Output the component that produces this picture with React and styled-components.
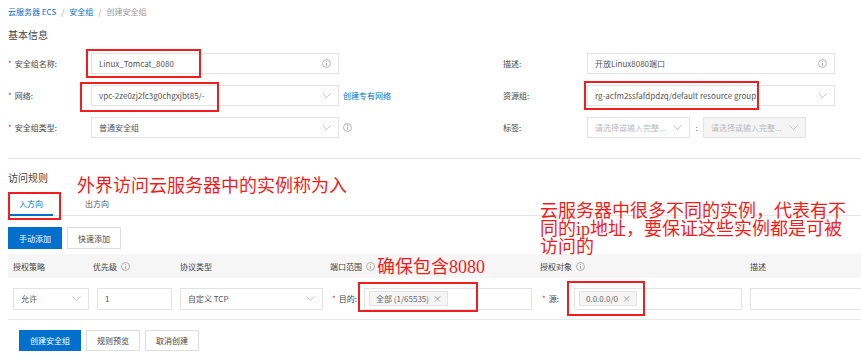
import React from 'react';
import styled, { createGlobalStyle } from 'styled-components';

const GlobalStyle = createGlobalStyle`
  html, body { margin: 0; padding: 0; background: #fff; overflow: hidden; }
  body { font-family: "Noto Sans CJK SC", "Noto Sans", sans-serif; color: #444; }
  * { box-sizing: border-box; }
`;

const Page = styled.div`
  position: relative;
  width: 861px;
  height: 363px;
  overflow: hidden;
  padding-left: 8px;
  font-size: 8px;
`;

const Breadcrumb = styled.nav`
  display: flex;
  align-items: center;
  gap: 5px;
  height: 22px;
  font-size: 8px;
`;

const Crumb = styled.span`
  color: ${(p) => (p.$link ? '#0070cc' : '#999')};
`;

const SectionTitle = styled.div`
  font-size: 10px;
  line-height: 16px;
  color: #444;
  margin-top: ${(p) => p.$mt}px;
`;

const FormGrid = styled.div`
  display: grid;
  grid-template-columns: 495px 1fr;
  grid-auto-rows: 21px;
  row-gap: 11px;
  margin-top: 10px;
`;

const Field = styled.div`
  display: flex;
  align-items: center;
  height: 21px;
`;

const Label = styled.div`
  width: ${(p) => p.$w}px;
  flex-shrink: 0;
  display: flex;
  align-items: center;
  color: #444;
  font-size: 8px;
  padding-left: ${(p) => p.$pl || 0}px;
`;

const Star = styled.span`
  color: #e4393c;
  margin-right: 3px;
`;

const Box = styled.div`
  width: ${(p) => p.$w}px;
  height: ${(p) => p.$h || 21}px;
  flex-shrink: 0;
  margin-left: ${(p) => p.$ml || 0}px;
  border: 1px solid #e3e3e3;
  background: ${(p) => (p.$disabled ? '#f5f5f5' : '#fff')};
  display: flex;
  align-items: center;
  justify-content: space-between;
  padding: 0 ${(p) => p.$pr ?? 7}px 0 ${(p) => p.$pl ?? 7}px;
  color: #555;
  font-size: 8px;
  white-space: nowrap;
  overflow: hidden;
`;

const Placeholder = styled.span`
  color: #bbb;
`;

const Link = styled.a`
  color: #0070cc;
  margin-left: 4px;
  text-decoration: none;
`;

const IconWrap = styled.span`
  display: inline-flex;
  align-items: center;
  margin-left: ${(p) => p.$ml || 0}px;
`;

const TagSep = styled.span`
  width: 13px;
  text-align: center;
  color: #666;
`;

const Divider = styled.div`
  margin-top: 20px;
  border-top: 1px solid #e5e5e5;
`;

const TabBar = styled.div`
  display: flex;
  gap: 22px;
  margin-top: 7px;
  padding-left: 1px;
  border-bottom: 1px solid #e5e5e5;
`;

const Tab = styled.div`
  padding: 0 10px;
  line-height: 21px;
  font-size: 8px;
  color: ${(p) => (p.$active ? '#0070cc' : '#555')};
  border-bottom: 2px solid ${(p) => (p.$active ? '#0070cc' : 'transparent')};
  margin-bottom: -1px;
`;

const ButtonRow = styled.div`
  display: flex;
  gap: ${(p) => p.$gap || 5}px;
  margin-top: ${(p) => p.$mt}px;
  padding-left: ${(p) => p.$pl || 0}px;
`;

const Button = styled.button`
  height: ${(p) => p.$h || 22}px;
  padding: 0 10px;
  font-family: inherit;
  font-size: 8px;
  border: 1px solid ${(p) => (p.$primary ? '#0070cc' : '#ddd')};
  background: ${(p) => (p.$primary ? '#0070cc' : '#fff')};
  color: ${(p) => (p.$primary ? '#fff' : '#444')};
  border-radius: 0;
`;

const Table = styled.div`
  width: 900px;
  margin-top: 5px;
`;

const cols = '80px 87px 150px 210px 210px 1fr';

const HeaderRow = styled.div`
  display: grid;
  grid-template-columns: ${cols};
  align-items: center;
  height: 24px;
  padding-left: 5px;
  background: #f6f6f6;
  color: #444;
`;

const HeadCell = styled.div`
  display: flex;
  align-items: center;
  gap: 4px;
`;

const BodyRow = styled.div`
  display: grid;
  grid-template-columns: ${cols};
  align-items: center;
  height: 42px;
  padding-left: 5px;
  border-bottom: 1px solid #e8e8e8;
`;

const Cell = styled.div`
  display: flex;
  align-items: center;
`;

const Tag = styled.span`
  display: inline-flex;
  align-items: center;
  gap: 4px;
  height: 15px;
  padding: 0 5px 0 6px;
  background: #f5f5f5;
  border: 1px solid #e3e3e3;
  color: #666;
`;

const TagClose = styled.span`
  color: #999;
  font-size: 9px;
`;

const Highlight = styled.div`
  position: absolute;
  left: ${(p) => p.$x}px;
  top: ${(p) => p.$y}px;
  width: ${(p) => p.$w}px;
  height: ${(p) => p.$h}px;
  border: 2px solid #f01e1e;
  pointer-events: none;
`;

const Note = styled.div`
  position: absolute;
  left: ${(p) => p.$x}px;
  top: ${(p) => p.$y}px;
  color: #f21c1c;
  font-family: "Liberation Serif", "Noto Sans CJK SC", serif;
  font-size: 18px;
  line-height: 18px;
  white-space: nowrap;
`;

const InfoIcon = ({ size = 9 }) => (
  <svg width={size} height={size} viewBox="0 0 10 10">
    <circle cx="5" cy="5" r="4.4" fill="none" stroke="#999" strokeWidth="0.8" />
    <line x1="5" y1="4.3" x2="5" y2="7.5" stroke="#999" strokeWidth="0.9" />
    <circle cx="5" cy="2.8" r="0.6" fill="#999" />
  </svg>
);

const Chevron = () => (
  <svg width="9" height="5" viewBox="0 0 9 5">
    <polyline points="0.5,0.5 4.5,4.5 8.5,0.5" fill="none" stroke="#bbb" strokeWidth="0.8" />
  </svg>
);

export default function App() {
  return (
    <>
      <GlobalStyle />
      <Page>
        <Breadcrumb>
          <Crumb $link>云服务器 ECS</Crumb>
          <Crumb>/</Crumb>
          <Crumb $link>安全组</Crumb>
          <Crumb>/</Crumb>
          <Crumb>创建安全组</Crumb>
        </Breadcrumb>

        <SectionTitle $mt={5}>基本信息</SectionTitle>

        <FormGrid>
          <Field>
            <Label $w={83}><Star>*</Star>安全组名称:</Label>
            <Box $w={248}>
              <span>Linux_Tomcat_8080</span>
              <InfoIcon />
            </Box>
          </Field>
          <Field>
            <Label $w={84}>描述:</Label>
            <Box $w={248}>
              <span>开放Linux8080端口</span>
              <InfoIcon />
            </Box>
          </Field>

          <Field>
            <Label $w={83}><Star>*</Star>网络:</Label>
            <Box $w={248}>
              <span>vpc-2ze0zj2fc3g0chgxjbt85/-</span>
              <Chevron />
            </Box>
            <Link>创建专有网络</Link>
          </Field>
          <Field>
            <Label $w={84}>资源组:</Label>
            <Box $w={248}>
              <span>rg-acfm2ssfafdpdzq/default resource group</span>
              <Chevron />
            </Box>
          </Field>

          <Field>
            <Label $w={83}><Star>*</Star>安全组类型:</Label>
            <Box $w={248}>
              <span>普通安全组</span>
              <Chevron />
            </Box>
            <IconWrap $ml={4}><InfoIcon /></IconWrap>
          </Field>
          <Field>
            <Label $w={84}>标签:</Label>
            <Box $w={103}>
              <Placeholder>请选择或输入完整...</Placeholder>
              <Chevron />
            </Box>
            <TagSep>:</TagSep>
            <Box $w={103} $disabled>
              <Placeholder>请选择或输入完整...</Placeholder>
              <Chevron />
            </Box>
          </Field>
        </FormGrid>

        <Divider />

        <SectionTitle $mt={11}>访问规则</SectionTitle>

        <TabBar>
          <Tab $active>入方向</Tab>
          <Tab>出方向</Tab>
        </TabBar>

        <ButtonRow $mt={11}>
          <Button $primary>手动添加</Button>
          <Button>快速添加</Button>
        </ButtonRow>

        <Table>
          <HeaderRow>
            <HeadCell>授权策略</HeadCell>
            <HeadCell>优先级 <InfoIcon /></HeadCell>
            <HeadCell>协议类型</HeadCell>
            <HeadCell>端口范围 <InfoIcon /></HeadCell>
            <HeadCell>授权对象 <InfoIcon /></HeadCell>
            <HeadCell>描述</HeadCell>
          </HeaderRow>
          <BodyRow>
            <Cell>
              <Box $w={76} $h={22}>
                <span>允许</span>
                <Chevron />
              </Box>
            </Cell>
            <Cell>
              <Box $w={75} $h={22} $ml={4}>
                <span>1</span>
              </Box>
            </Cell>
            <Cell>
              <Box $w={143} $h={22}>
                <span>自定义 TCP</span>
                <Chevron />
              </Box>
            </Cell>
            <Cell>
              <Label $w={34} $pl={2}><Star>*</Star>目的:</Label>
              <Box $w={168} $h={22} $pl={4}>
                <Tag>全部 (1/65535)<TagClose>×</TagClose></Tag>
              </Box>
            </Cell>
            <Cell>
              <Label $w={34} $pl={2}><Star>*</Star>源:</Label>
              <Box $w={168} $h={22} $pl={4}>
                <Tag>0.0.0.0/0<TagClose>×</TagClose></Tag>
              </Box>
            </Cell>
            <Cell>
              <Box $w={150} $h={22} />
            </Cell>
          </BodyRow>
        </Table>

        <ButtonRow $mt={10} $pl={11} $gap={5}>
          <Button $primary $h={21}>创建安全组</Button>
          <Button $h={21}>规则预览</Button>
          <Button $h={21}>取消创建</Button>
        </ButtonRow>

        <Highlight $x={86} $y={49} $w={115} $h={29} />
        <Highlight $x={80} $y={82} $w={139} $h={30} />
        <Highlight $x={584} $y={81} $w={175} $h={29} />
        <Highlight $x={8} $y={192} $w={53} $h={28} />
        <Highlight $x={358} $y={282} $w={120} $h={30} />
        <Highlight $x={567} $y={281} $w={78} $h={35} />

        <Note $x={77} $y={177}>外界访问云服务器中的实例称为入</Note>
        <Note $x={540} $y={202}>
          云服务器中很多不同的实例，代表有不<br />
          同的ip地址，要保证这些实例都是可被<br />
          访问的
        </Note>
        <Note $x={377} $y={258}>确保包含8080</Note>
      </Page>
    </>
  );
}
